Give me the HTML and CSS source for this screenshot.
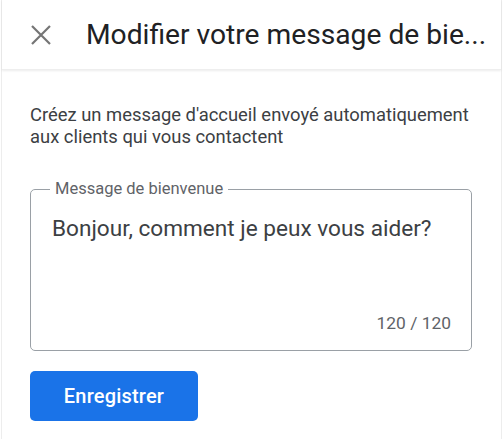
FILE: index.html
```html
<!DOCTYPE html>
<html lang="fr">
<head>
<meta charset="utf-8">
<link rel="stylesheet" href="styles.css">
</head>
<body>
<div class="page">
  <header class="topbar">
    <button class="close" aria-label="Fermer">
      <svg width="20" height="20" viewBox="0 0 20 20"><path d="M1 1L19 19M19 1L1 19" stroke="#757575" stroke-width="2.2" fill="none"/></svg>
    </button>
    <h1 class="title">Modifier votre message de bie...</h1>
  </header>
  <main class="content">
    <p class="desc">Créez un message d'accueil envoyé automatiquement aux clients qui vous contactent</p>
    <fieldset class="field">
      <legend class="legend">Message de bienvenue</legend>
      <div class="value">Bonjour, comment je peux vous aider?</div>
      <div class="counter">120 / 120</div>
    </fieldset>
    <button class="save">Enregistrer</button>
  </main>
</div>
</body>
</html>
```
FILE: styles.css
```css
html, body {
  margin: 0;
  padding: 0;
  background: #ffffff;
}
body {
  font-family: Roboto, "Liberation Sans", Arial, sans-serif;
  color: #3c4043;
}
.page {
  margin: 0 2px 0 1px;
  border-left: 1px solid #ededed;
  border-right: 1px solid #ededed;
  height: 439px;
  box-sizing: border-box;
}
.topbar {
  height: 70px;
  display: flex;
  align-items: center;
  box-shadow: 0 1px 2px rgba(0,0,0,0.08);
  border-bottom: 1px solid #eeeeee;
  box-sizing: border-box;
}
.close {
  border: 0;
  background: none;
  padding: 0;
  margin-left: 29px;
  width: 20px;
  height: 20px;
  display: flex;
}
.title {
  margin: 0 0 0 35px;
  font-size: 28.2px;
  font-weight: 400;
  color: #202124;
  white-space: nowrap;
}
.content {
  padding: 0 0 0 28px;
}
.desc {
  margin: 34px 0 0 0;
  width: 460px;
  font-size: 18.4px;
  line-height: 22px;
  color: #3c4043;
}
.field {
  margin: 32px 0 0 0;
  width: 442px;
  height: 171px;
  box-sizing: border-box;
  border: 1.5px solid #9aa0a6;
  border-radius: 5px;
  padding: 0 20px 0 21px;
  position: relative;
}
.legend {
  padding: 0 5px;
  margin-left: -2px;
  font-size: 16.5px;
  color: #5f6368;
  line-height: 18px;
}
.value {
  margin-top: 17px;
  font-size: 22.6px;
  color: #3c4043;
}
.counter {
  position: absolute;
  right: 20px;
  bottom: 17px;
  font-size: 17.4px;
  color: #5f6368;
}
.save {
  margin-top: 20px;
  width: 168px;
  height: 50px;
  background: #1a73e8;
  border: 0;
  border-radius: 5px;
  color: #ffffff;
  font-family: Roboto, "Liberation Sans", Arial, sans-serif;
  font-size: 20px;
  font-weight: 500;
  letter-spacing: 0.2px;
}
```
